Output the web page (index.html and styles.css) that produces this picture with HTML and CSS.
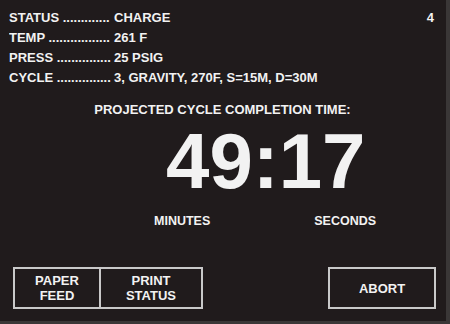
FILE: index.html
```html
<!DOCTYPE html>
<html lang="en">
<head>
    <meta charset="UTF-8">
    <meta name="viewport" content="width=device-width, initial-scale=1.0">
    <title>Cycle Status</title>
    <link rel="stylesheet" href="styles.css">
</head>
<body>
    <div class="screen">
        <div class="top">
            <div class="info">
                <div class="row"><span class="label">STATUS .............</span><span class="value">CHARGE</span></div>
                <div class="row"><span class="label">TEMP .................</span><span class="value">261 F</span></div>
                <div class="row"><span class="label">PRESS ...............</span><span class="value">25 PSIG</span></div>
                <div class="row"><span class="label">CYCLE ...............</span><span class="value">3, GRAVITY, 270F, S=15M, D=30M</span></div>
            </div>
            <div class="page-num">4</div>
        </div>

        <div class="title">PROJECTED CYCLE COMPLETION TIME:</div>
        <div class="clock">49:17</div>
        <div class="units">
            <span class="unit-min">MINUTES</span>
            <span class="unit-sec">SECONDS</span>
        </div>

        <div class="buttons">
            <div class="btn-group">
                <button class="btn btn-feed">PAPER<br>FEED</button>
                <button class="btn btn-print">PRINT<br>STATUS</button>
            </div>
            <button class="btn btn-abort">ABORT</button>
        </div>
    </div>
</body>
</html>
```

FILE: styles.css
```css
body {
    margin: 0;
    background-color: #3a3737;
    font-family: "Liberation Sans", Arial, sans-serif;
    font-weight: bold;
    color: #f2f2f2;
}

.screen {
    width: 446px;
    height: 321px;
    background-color: #201b1c;
    box-sizing: border-box;
    padding: 8px 10px 12px 9px;
    display: flex;
    flex-direction: column;
}

.top {
    display: flex;
    justify-content: space-between;
}

.info {
    font-size: 13px;
    line-height: 20px;
}

.row {
    display: flex;
    white-space: nowrap;
}

.label {
    width: 105px;
    overflow: hidden;
}

.page-num {
    font-size: 13px;
    line-height: 20px;
    padding-right: 2px;
}

.title {
    margin-top: 12px;
    font-size: 13px;
    line-height: 20px;
    text-align: center;
}

.clock {
    margin-top: 2px;
    padding-left: 157px;
    font-size: 78px;
    line-height: 78px;
}

.units {
    margin-top: 11px;
    font-size: 12.5px;
    line-height: 20px;
    display: flex;
}

.unit-min {
    margin-left: 145px;
}

.unit-sec {
    margin-left: 104px;
}

.buttons {
    margin-top: auto;
    display: flex;
    justify-content: space-between;
    align-items: flex-end;
    padding-left: 4px;
}

.btn-group {
    display: flex;
}

.btn {
    font-family: inherit;
    font-weight: bold;
    font-size: 13px;
    line-height: 15px;
    color: #f2f2f2;
    background: none;
    border: 2px solid #c9c9c9;
    height: 42px;
    padding: 0;
    cursor: pointer;
}

.btn-feed {
    width: 88px;
}

.btn-print {
    width: 104px;
    margin-left: -2px;
}

.btn-abort {
    width: 108px;
}
```
